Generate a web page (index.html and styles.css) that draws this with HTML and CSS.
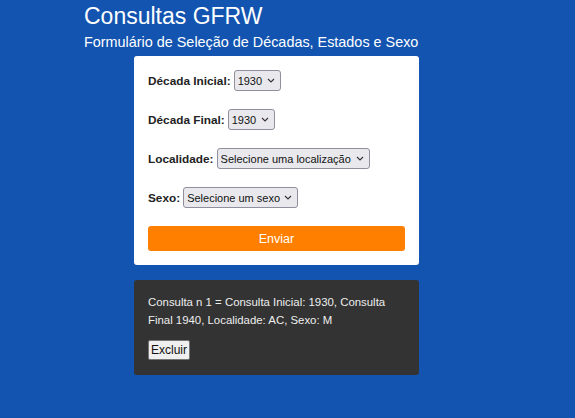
FILE: index.html
```html
<!DOCTYPE html>
<html lang="pt-BR">
<head>
<meta charset="utf-8">
<title>Consultas GFRW</title>
<link rel="stylesheet" href="styles.css">
</head>
<body>
<div class="page">
  <header class="header">
    <h1 class="title">Consultas GFRW</h1>
    <p class="subtitle">Formulário de Seleção de Décadas, Estados e Sexo</p>
  </header>
  <form class="card form-card">
    <div class="row">
      <label class="label" for="ini">Década Inicial:</label>
      <span class="select-wrap">
        <select id="ini" class="select"><option>1930</option></select>
        <svg class="chev" width="8" height="5" viewBox="0 0 8 5"><path d="M1 1 L4 4 L7 1" fill="none" stroke="#333" stroke-width="1.1"/></svg>
      </span>
    </div>
    <div class="row">
      <label class="label" for="fim">Década Final:</label>
      <span class="select-wrap">
        <select id="fim" class="select"><option>1930</option></select>
        <svg class="chev" width="8" height="5" viewBox="0 0 8 5"><path d="M1 1 L4 4 L7 1" fill="none" stroke="#333" stroke-width="1.1"/></svg>
      </span>
    </div>
    <div class="row">
      <label class="label" for="loc">Localidade:</label>
      <span class="select-wrap">
        <select id="loc" class="select"><option>Selecione uma localização</option></select>
        <svg class="chev" width="8" height="5" viewBox="0 0 8 5"><path d="M1 1 L4 4 L7 1" fill="none" stroke="#333" stroke-width="1.1"/></svg>
      </span>
    </div>
    <div class="row">
      <label class="label" for="sexo">Sexo:</label>
      <span class="select-wrap">
        <select id="sexo" class="select"><option>Selecione um sexo</option></select>
        <svg class="chev" width="8" height="5" viewBox="0 0 8 5"><path d="M1 1 L4 4 L7 1" fill="none" stroke="#333" stroke-width="1.1"/></svg>
      </span>
    </div>
    <button type="button" class="submit">Enviar</button>
  </form>
  <div class="card result-card">
    <p class="result-text">Consulta n 1 = Consulta Inicial: 1930, Consulta Final 1940, Localidade: AC, Sexo: M</p>
    <button type="button" class="delete">Excluir</button>
  </div>
</div>
</body>
</html>
```
FILE: styles.css
```css
html, body {
  margin: 0;
  padding: 0;
}
body {
  background: #1254b0;
  font-family: "Liberation Sans", Arial, sans-serif;
  height: 418px;
  overflow: hidden;
}
.page {
  display: flex;
  flex-direction: column;
  padding-top: 1px;
}
.header {
  padding-left: 84px;
  color: #ffffff;
}
.title {
  margin: 1px 0 0;
  font-size: 23px;
  font-weight: normal;
  line-height: 28px;
}
.subtitle {
  margin: 2px 0 0;
  font-size: 14.4px;
  line-height: 20px;
}
.card {
  margin-left: 134px;
  width: 285px;
  box-sizing: border-box;
  border-radius: 3px;
}
.form-card {
  margin-top: 4px;
  background: #ffffff;
  padding: 14px 14px 14px;
  display: flex;
  flex-direction: column;
  gap: 18px;
}
.row {
  display: flex;
  align-items: center;
  gap: 3px;
  height: 21px;
}
.label {
  font-size: 11.8px;
  font-weight: bold;
  color: #222;
}
.select-wrap {
  position: relative;
  display: inline-flex;
}
.select {
  appearance: none;
  -webkit-appearance: none;
  font-family: "Liberation Sans", Arial, sans-serif;
  font-size: 11px;
  height: 21px;
  padding: 0 17px 0 3px;
  color: #111;
  background: #e9e9ed;
  border: 1px solid #8f8f9d;
  border-radius: 3px;
}
.chev {
  position: absolute;
  right: 6px;
  top: 8px;
  pointer-events: none;
}
.submit {
  margin-top: 0;
  height: 25px;
  border: none;
  border-radius: 3px;
  background: #ff7f00;
  color: #ffffff;
  font-family: "Liberation Sans", Arial, sans-serif;
  font-size: 12.5px;
}
.result-card {
  margin-top: 15px;
  background: #333333;
  padding: 13px 14px 15px;
  color: #eeeeee;
}
.result-text {
  margin: 0 0 11px;
  font-size: 11.4px;
  line-height: 18px;
}
.delete {
  font-family: "Liberation Sans", Arial, sans-serif;
  font-size: 12px;
  height: 20px;
  padding: 0 2px;
  background: #efefef;
  border: 1px solid #767676;
  border-radius: 2px;
  color: #111;
}
```
